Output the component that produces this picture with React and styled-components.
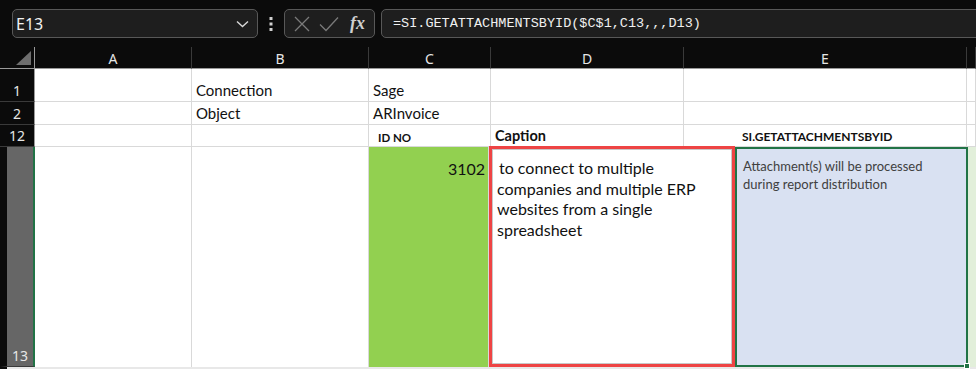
import React from "react";
import styled, { createGlobalStyle } from "styled-components";

const GlobalStyle = createGlobalStyle`
  * { box-sizing: border-box; }
  html, body { margin: 0; padding: 0; background: #0b0b0b; overflow: hidden; }
`;

const cellFont = `Lato, "Open Sans", sans-serif`;
const uiFont = `"Noto Sans", "Open Sans", sans-serif`;

const Page = styled.div`
  width: 976px;
  height: 369px;
  display: flex;
  flex-direction: column;
  background: #0b0b0b;
  overflow: hidden;
`;

const Toolbar = styled.div`
  height: 47px;
  display: flex;
  align-items: flex-start;
  padding: 9px 0 0 12px;
  background: #0b0b0b;
`;

const Box = styled.div`
  height: 29px;
  border: 1px solid #585858;
  border-radius: 5px;
  background: #1e1e1e;
  display: flex;
  align-items: center;
`;

const NameBox = styled(Box)`
  width: 246px;
  padding: 0 8px 0 3px;
  justify-content: space-between;
  font-family: ${uiFont};
  font-size: 16px;
  color: #f2f2f2;
`;

const Dots = styled.div`
  width: 26px;
  height: 29px;
  display: flex;
  align-items: center;
  justify-content: center;
`;

const FxBox = styled(Box)`
  width: 91px;
  padding: 0 6px 0 9px;
  gap: 9px;
`;

const FxLabel = styled.span`
  font-family: "Liberation Serif", serif;
  font-style: italic;
  font-weight: bold;
  font-size: 18px;
  color: #cfcfcf;
  margin-left: 2px;
`;

const FormulaBox = styled(Box)`
  flex: 1;
  margin-left: 6px;
  margin-right: -10px;
  padding-left: 11px;
  font-family: "Liberation Mono", monospace;
  font-size: 13.5px;
  color: #f0f0f0;
`;

const Row = styled.div`
  display: grid;
  grid-template-columns: ${(p) => p.$cols || "35px 157px 177px 122px 193px 283px 1fr"};
  height: ${(p) => p.$h}px;
  flex-shrink: 0;
`;

const ColHead = styled.div`
  background: #0b0b0b;
  border-right: 1px solid #3a3a3a;
  border-bottom: 1px solid #9a9a9a;
  color: #e6e6e6;
  font-family: ${uiFont};
  font-size: 14px;
  display: flex;
  align-items: center;
  justify-content: center;
  padding-top: 1px;
`;

const Corner = styled(ColHead)`
  border-right: 1px solid #9a9a9a;
  justify-content: flex-end;
  align-items: flex-end;
  padding: 0 3px 3px 0;
`;

const RowHead = styled.div`
  background: ${(p) => (p.$active ? "#666666" : "#0b0b0b")};
  border-right: ${(p) => (p.$active ? "2px solid #217346" : "1px solid #9a9a9a")};
  border-left: ${(p) => (p.$active ? "7px solid #0b0b0b" : "none")};
  border-bottom: 1px solid #3a3a3a;
  color: #e6e6e6;
  font-family: ${uiFont};
  font-size: 14px;
  display: flex;
  align-items: flex-end;
  justify-content: center;
  line-height: 20px;
`;

const Cell = styled.div`
  background: ${(p) => p.$bg || "#ffffff"};
  border-right: 1px solid #d9d9d9;
  border-bottom: 1px solid #d9d9d9;
  font-family: ${cellFont};
  font-size: ${(p) => p.$size || 15}px;
  font-weight: ${(p) => (p.$bold ? 700 : 400)};
  color: #111;
  display: flex;
  align-items: flex-end;
  justify-content: ${(p) => (p.$right ? "flex-end" : "flex-start")};
  padding: 0 ${(p) => (p.$right ? 3 : 2)}px 2px ${(p) => p.$pl ?? 4}px;
  white-space: nowrap;
  overflow: hidden;
`;

const TopCell = styled(Cell)`
  align-items: flex-start;
  padding-top: 12px;
  border-bottom: none;
`;

const CaptionBox = styled.div`
  border: 3px solid #ee4444;
  background: #fff;
  box-shadow: inset 1px 1px 0 #c8c8c8, inset -1px -1px 0 #c8c8c8;
  margin-top: -1px;
  padding: 9px 4px 0 5px;
  font-family: ${cellFont};
  font-size: 16px;
  line-height: 20.5px;
  color: #111;
`;

const Lead = styled.span`
  padding-left: 2px;
`;

const AttachCell = styled.div`
  background: #d9e1f2;
  border: 2px solid #217346;
  padding: 9px 6px 0 6px;
  font-family: ${cellFont};
  font-size: 13px;
  line-height: 17.5px;
  color: #404040;
  position: relative;
`;

const FillHandle = styled.span`
  position: absolute;
  right: -4px;
  bottom: -4px;
  width: 6px;
  height: 6px;
  background: #217346;
  border: 1px solid #fff;
`;

const Spill = styled.div`
  background: #e2efda;
`;

const BottomStrip = styled.div`
  height: 2px;
  margin-left: 7px;
  background: #e8e8e8;
`;

const Chevron = () => (
  <svg width="13" height="8" viewBox="0 0 13 8">
    <path d="M1 1.5 L6.5 6.5 L12 1.5" fill="none" stroke="#d8d8d8" strokeWidth="1.4" />
  </svg>
);

const VDots = () => (
  <svg width="4" height="14" viewBox="0 0 4 14">
    <rect x="0.5" y="0" width="3" height="3" fill="#d0d0d0" />
    <rect x="0.5" y="5.5" width="3" height="3" fill="#d0d0d0" />
    <rect x="0.5" y="11" width="3" height="3" fill="#d0d0d0" />
  </svg>
);

const Cross = () => (
  <svg width="16" height="16" viewBox="0 0 16 16">
    <path d="M1 1 L15 15 M15 1 L1 15" stroke="#7a7a7a" strokeWidth="1.3" />
  </svg>
);

const Check = () => (
  <svg width="20" height="16" viewBox="0 0 20 16">
    <path d="M1 8.5 L7 14.5 L19 1.5" fill="none" stroke="#7a7a7a" strokeWidth="1.3" />
  </svg>
);

const CornerTri = () => (
  <svg width="15" height="14" viewBox="0 0 15 14">
    <path d="M15 0 L15 14 L0 14 Z" fill="#6e6e6e" />
  </svg>
);

const cols = ["A", "B", "C", "D", "E", ""];

export default function App() {
  return (
    <Page>
      <GlobalStyle />
      <Toolbar>
        <NameBox>
          <span>E13</span>
          <Chevron />
        </NameBox>
        <Dots>
          <VDots />
        </Dots>
        <FxBox>
          <Cross />
          <Check />
          <FxLabel>fx</FxLabel>
        </FxBox>
        <FormulaBox>=SI.GETATTACHMENTSBYID($C$1,C13,,,D13)</FormulaBox>
      </Toolbar>

      <Row $h={22}>
        <Corner>
          <CornerTri />
        </Corner>
        {cols.map((c, i) => (
          <ColHead key={i}>{c}</ColHead>
        ))}
      </Row>

      <Row $h={33}>
        <RowHead>1</RowHead>
        <Cell />
        <Cell>Connection</Cell>
        <Cell>Sage</Cell>
        <Cell />
        <Cell />
        <Cell />
      </Row>

      <Row $h={23}>
        <RowHead>2</RowHead>
        <Cell />
        <Cell>Object</Cell>
        <Cell>ARInvoice</Cell>
        <Cell />
        <Cell />
        <Cell />
      </Row>

      <Row $h={22}>
        <RowHead>12</RowHead>
        <Cell />
        <Cell />
        <Cell $bold $size={11.5} $pl={9}>
          ID NO
        </Cell>
        <Cell $bold $size={14.5}>
          Caption
        </Cell>
        <Cell $bold $size={12} $pl={58}>
          SI.GETATTACHMENTSBYID
        </Cell>
        <Cell />
      </Row>

      <Row $h={220} $cols="35px 157px 177px 120px 246px 233px 1fr">
        <RowHead $active>13</RowHead>
        <TopCell />
        <TopCell />
        <TopCell $bg="#92d050" $right $size={16}>
          3102
        </TopCell>
        <CaptionBox>
          <Lead>to connect to multiple</Lead> companies and multiple ERP websites from a single spreadsheet
        </CaptionBox>
        <AttachCell>
          Attachment(s) will be processed during report distribution
          <FillHandle />
        </AttachCell>
        <Spill />
      </Row>
      <BottomStrip />
    </Page>
  );
}
